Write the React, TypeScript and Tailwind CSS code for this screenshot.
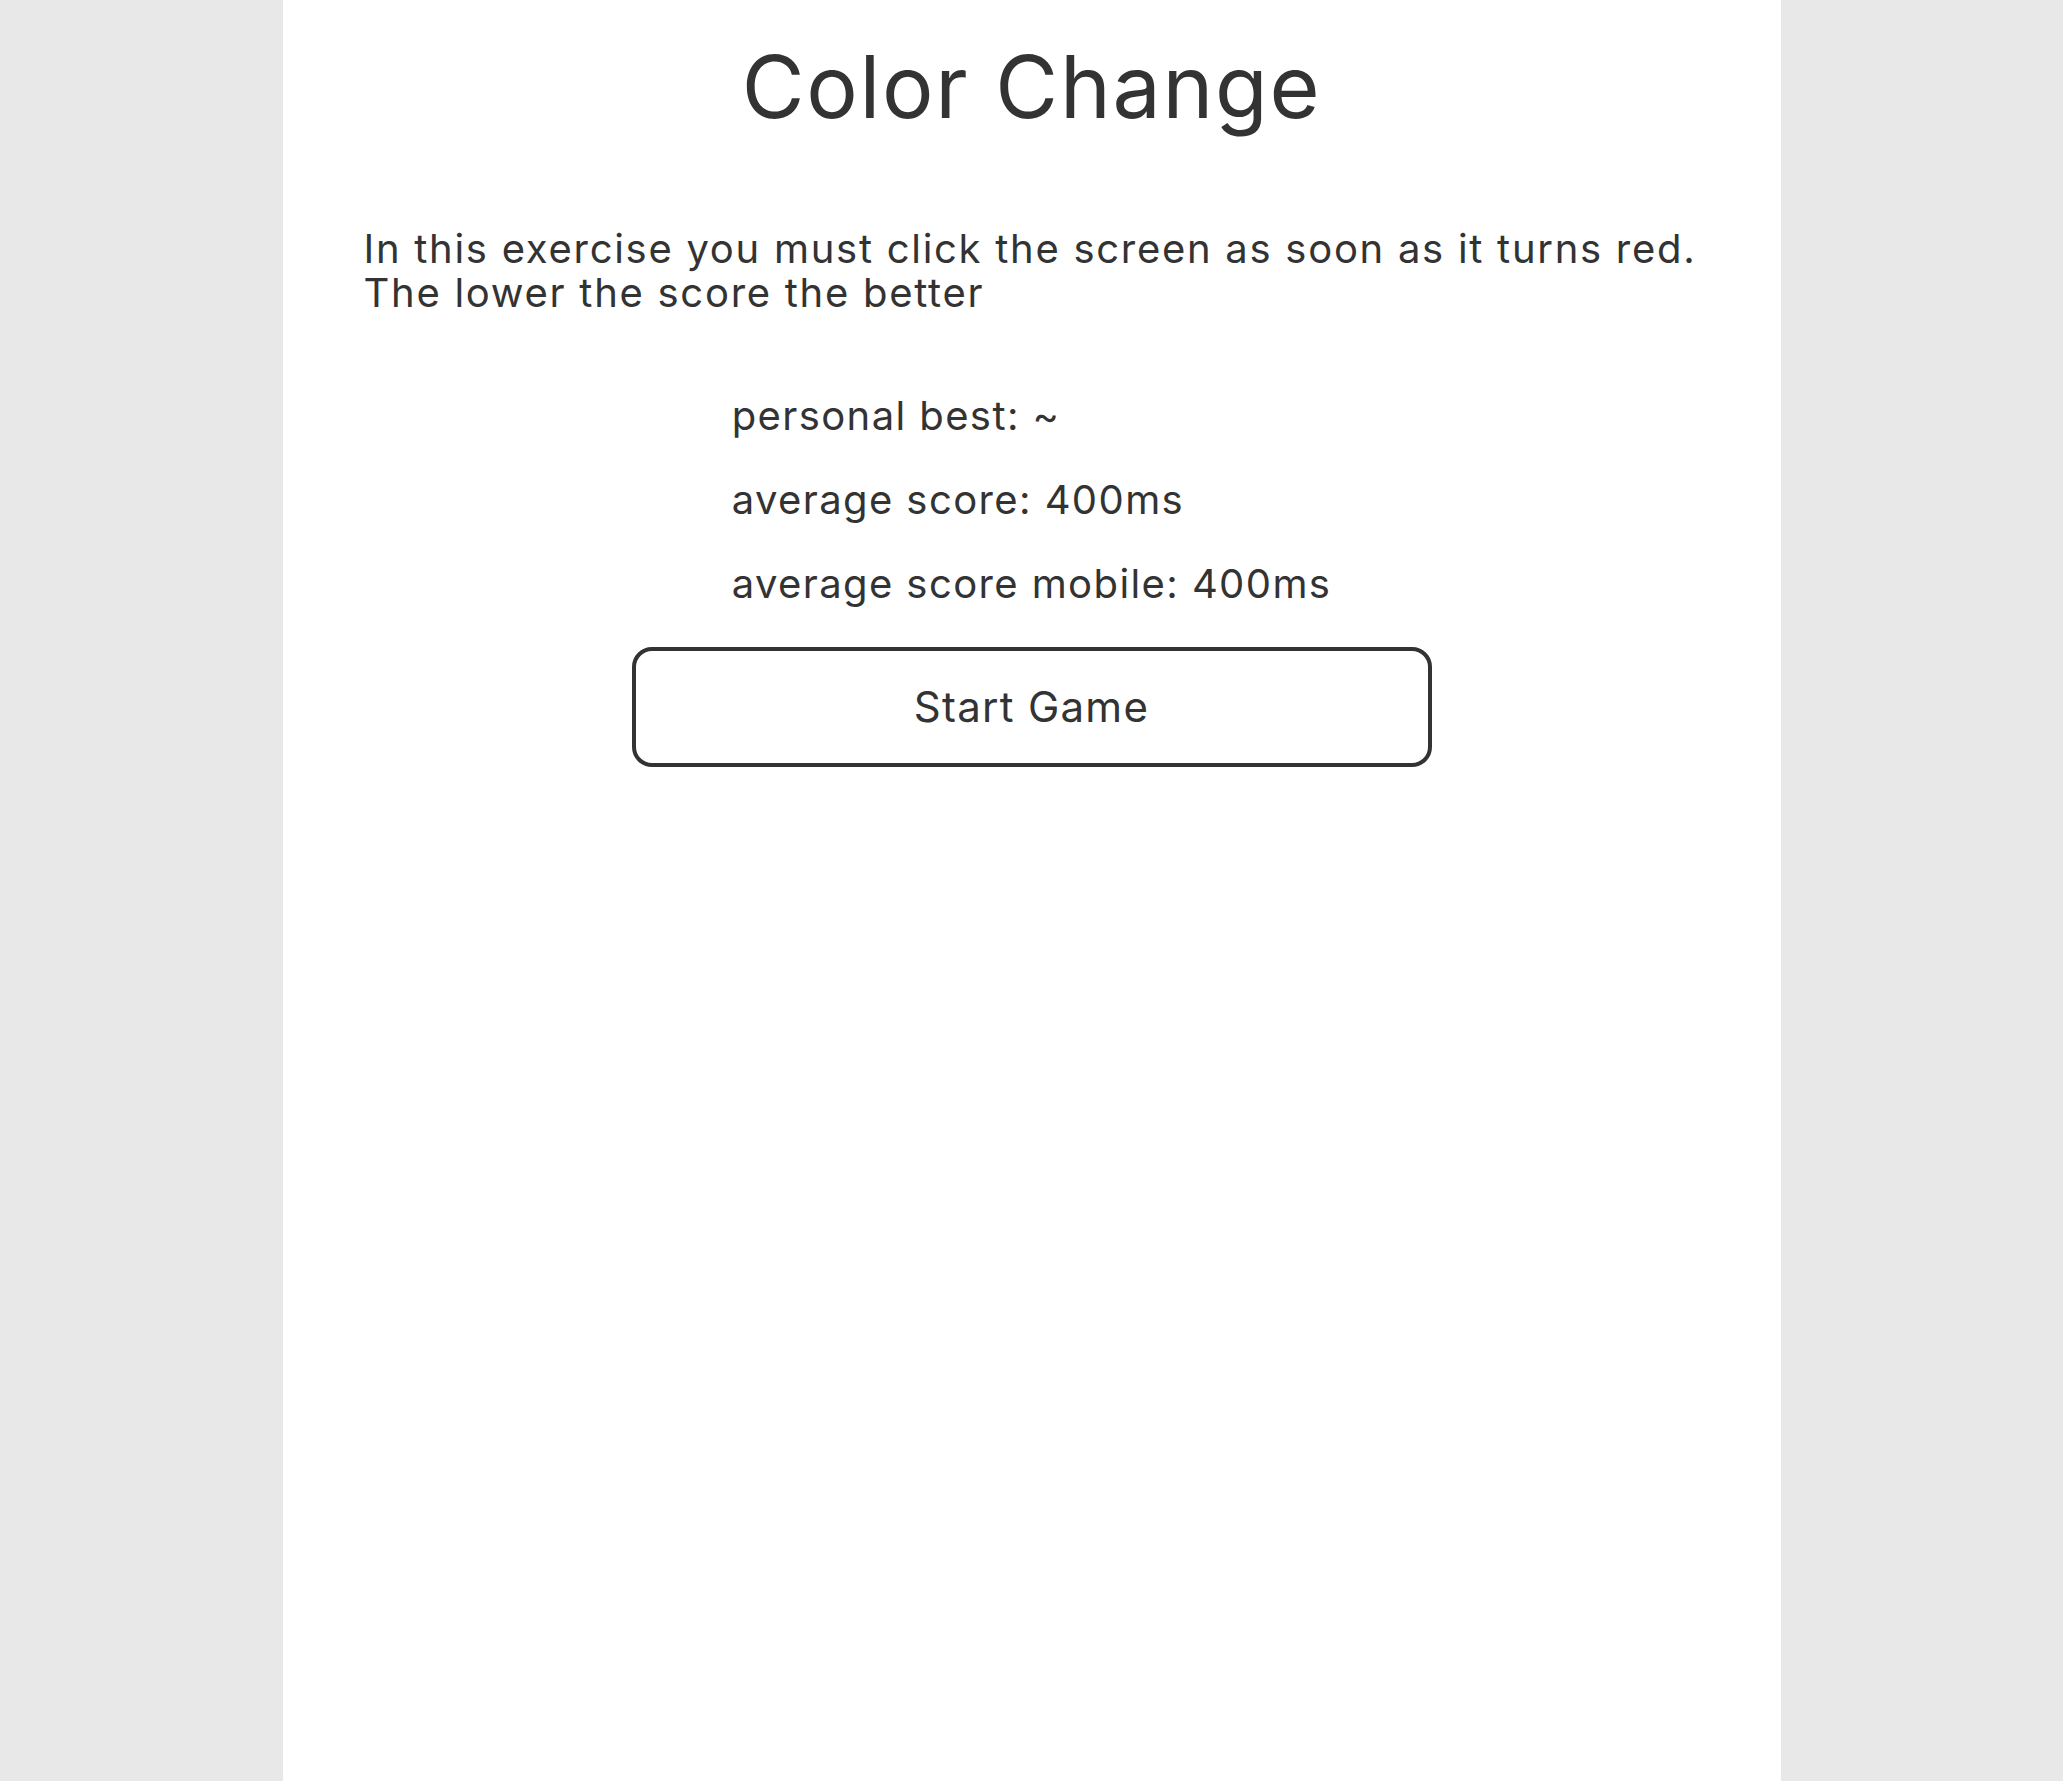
import React from 'react';

const stats = [
  { label: 'personal best', value: '~' },
  { label: 'average score', value: '400ms' },
  { label: 'average score mobile', value: '400ms' },
];

export default function App() {
  return (
    <div className="min-h-screen bg-[#e8e8e8] font-['Inter',sans-serif] text-[#333333]">
      <main className="mx-auto flex min-h-screen w-[1498px] flex-col bg-white px-[81px] pt-[44px]">
        <h1 className="text-center text-[86px] font-normal leading-none tracking-[0.02em]">Color Change</h1>

        <p className="mt-[97px] whitespace-nowrap text-[40px] leading-[44px] tracking-[0.043em]">
          In this exercise you must click the screen as soon as it turns red.
          <br />
          The lower the score the better
        </p>

        {/* Scores */}
        <div className="mx-auto mt-[79px] flex w-fit flex-col gap-[40px]">
          {stats.map((s) => (
            <p key={s.label} className="text-[40px] leading-[44px] tracking-[0.035em]">
              {s.label}: {s.value}
            </p>
          ))}
        </div>

        <button className="mx-auto mt-[41px] h-[120px] w-[800px] rounded-[20px] border-4 border-[#333333] text-[42px] leading-none tracking-[0.03em]">
          Start Game
        </button>
      </main>
    </div>
  );
}
